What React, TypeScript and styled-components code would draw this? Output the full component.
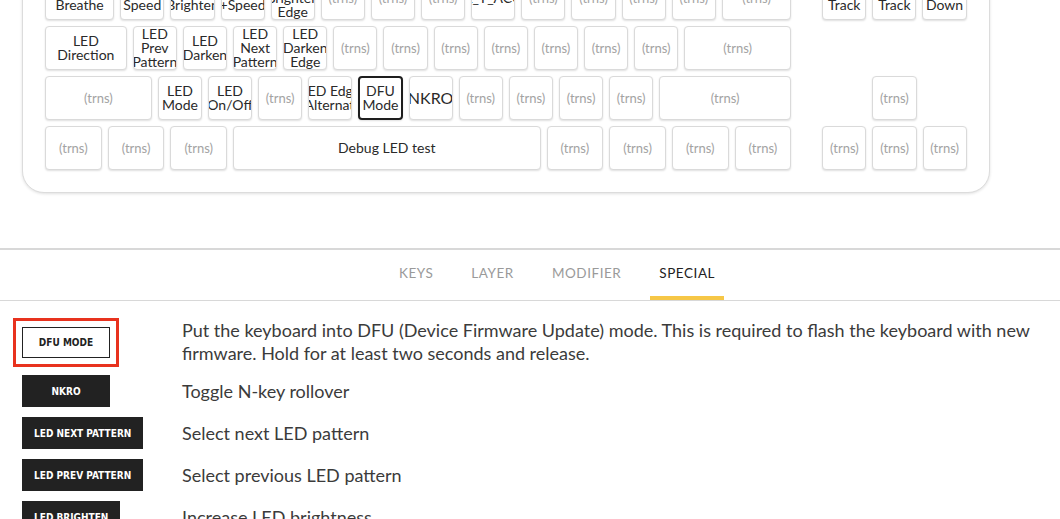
import React from "react";
import styled, { createGlobalStyle } from "styled-components";

const U = 50.15;
const GAP = 6;

const Global = createGlobalStyle`
  html, body { margin: 0; padding: 0; background: #ffffff; }
  body { overflow: hidden; font-family: Lato, "Noto Sans", sans-serif; color: #333; }
  * { box-sizing: border-box; }
`;

const Page = styled.div`
  width: 1060px;
  height: 519px;
  overflow: hidden;
  display: flex;
  flex-direction: column;
`;

const Card = styled.div`
  margin: -47px 0 0 22px;
  width: fit-content;
  padding: 22px;
  background: #fff;
  border: 1px solid #dcdcdc;
  border-radius: 0 0 22px 22px;
  box-shadow: 0 1px 3px rgba(0, 0, 0, 0.12);
  display: flex;
  flex-direction: column;
  gap: ${GAP}px;
`;

const Row = styled.div`
  display: flex;
  gap: ${GAP}px;
  height: 44px;
`;

const Spacer = styled.div<{ $w: number }>`
  width: ${(p) => p.$w * U - GAP}px;
  flex: none;
`;

const Key = styled.div<{ $w: number; $sel?: boolean }>`
  width: ${(p) => p.$w * U - GAP}px;
  height: 44px;
  flex: none;
  background: #fff;
  border: ${(p) => (p.$sel ? "2px solid #1e1e1e" : "1px solid #dadada")};
  border-radius: 4px;
  box-shadow: 0 1px 2px rgba(0, 0, 0, 0.13);
  display: flex;
  flex-direction: column;
  align-items: center;
  justify-content: center;
  overflow: hidden;
`;

const Line = styled.span<{ $big?: boolean }>`
  white-space: nowrap;
  font-size: ${(p) => (p.$big ? "16px" : "14px")};
  line-height: 14px;
  color: #2a2a2a;
`;

const Trns = styled.span`
  white-space: nowrap;
  font-size: 13px;
  color: #a3a3a3;
`;

const TabBar = styled.div`
  margin-top: 55px;
  border-top: 2px solid #d8d8d8;
  border-bottom: 1px solid #d8d8d8;
  display: flex;
  justify-content: center;
  gap: 20px;
  padding-left: 54px;
`;

const Tab = styled.div<{ $active?: boolean }>`
  height: 50px;
  padding: 0 9px;
  display: flex;
  align-items: center;
  border-bottom: 4px solid ${(p) => (p.$active ? "#f6c747" : "transparent")};
  font-size: 13.5px;
  letter-spacing: 0.55px;
  color: ${(p) => (p.$active ? "#222" : "#9a9a9a")};
`;

const List = styled.div`
  padding: 18px 20px 0 22px;
  display: grid;
  grid-template-columns: 160px 1fr;
  row-gap: 10px;
  align-items: center;
`;

const Btn = styled.div<{ $outline?: boolean }>`
  justify-self: start;
  min-width: 88px;
  height: ${(p) => (p.$outline ? "31px" : "32px")};
  padding: 0 12px;
  display: flex;
  align-items: center;
  justify-content: center;
  background: ${(p) => (p.$outline ? "#fff" : "#222")};
  color: ${(p) => (p.$outline ? "#222" : "#fff")};
  border: ${(p) => (p.$outline ? "1px solid #222" : "none")};
  outline: ${(p) => (p.$outline ? "3px solid #e8321e" : "none")};
  outline-offset: 6px;
  font-family: "Liberation Sans Narrow", "DejaVu Sans Condensed", "Roboto Condensed", sans-serif;
  font-weight: 700;
  font-stretch: condensed;
  font-size: 10px;
  letter-spacing: 0;
  white-space: nowrap;
`;

const Desc = styled.div`
  font-size: 18px;
  line-height: 23px;
  color: #3b3b3b;
`;

type KeyDef = { w?: number; l?: string[]; sel?: boolean; big?: boolean; gap?: boolean };

const T: KeyDef = {};
const G = (w: number): KeyDef => ({ gap: true, w });
const t = (w: number): KeyDef => ({ w });

const rows: KeyDef[][] = [
  [
    { w: 1.5, l: ["LED", "Breathe"] },
    { l: ["LED", "Speed"] },
    { l: ["LED", "Brighten"] },
    { l: ["LED", "+Speed"] },
    { l: ["LED", "Brighten", "Edge"] },
    T, T, T,
    { l: ["L_T_ACC"] },
    T, T, T, T,
    t(1.5),
    G(0.5),
    { l: ["Prev", "Track"] },
    { l: ["Next", "Track"] },
    { l: ["Vol", "Down"] },
  ],
  [
    { w: 1.75, l: ["LED", "Direction"] },
    { l: ["LED", "Prev", "Pattern"] },
    { l: ["LED", "Darken"] },
    { l: ["LED", "Next", "Pattern"] },
    { l: ["LED", "Darken", "Edge"] },
    T, T, T, T, T, T, T,
    t(2.25),
  ],
  [
    t(2.25),
    { l: ["LED", "Mode"] },
    { l: ["LED", "On/Off"] },
    T,
    { l: ["LED Edge", "/Alternate"] },
    { l: ["DFU", "Mode"], sel: true },
    { l: ["NKRO"], big: true },
    T, T, T, T,
    t(2.75),
    G(1.5),
    T,
  ],
  [
    t(1.25), t(1.25), t(1.25),
    { w: 6.25, l: ["Debug LED test"] },
    t(1.25), t(1.25), t(1.25), t(1.25),
    G(0.5),
    T, T, T,
  ],
];

const items: { label: string; desc: string; outline?: boolean }[] = [
  {
    label: "DFU MODE",
    outline: true,
    desc: "Put the keyboard into DFU (Device Firmware Update) mode. This is required to flash the keyboard with new firmware. Hold for at least two seconds and release.",
  },
  { label: "NKRO", desc: "Toggle N-key rollover" },
  { label: "LED NEXT PATTERN", desc: "Select next LED pattern" },
  { label: "LED PREV PATTERN", desc: "Select previous LED pattern" },
  { label: "LED BRIGHTEN", desc: "Increase LED brightness" },
  { label: "LED DARKEN", desc: "Decrease LED brightness" },
];

export default function App() {
  return (
    <Page>
      <Global />
      <Card>
        {rows.map((r, ri) => (
          <Row key={ri}>
            {r.map((k, ki) => {
              const w = k.w ?? 1;
              if (k.gap) return <Spacer key={ki} $w={w} />;
              return (
                <Key key={ki} $w={w} $sel={k.sel}>
                  {k.l ? (
                    k.l.map((ln, li) => (
                      <Line key={li} $big={k.big}>
                        {ln}
                      </Line>
                    ))
                  ) : (
                    <Trns>(trns)</Trns>
                  )}
                </Key>
              );
            })}
          </Row>
        ))}
      </Card>
      <TabBar>
        <Tab>KEYS</Tab>
        <Tab>LAYER</Tab>
        <Tab>MODIFIER</Tab>
        <Tab $active>SPECIAL</Tab>
      </TabBar>
      <List>
        {items.map((it) => (
          <React.Fragment key={it.label}>
            <Btn $outline={it.outline}>{it.label}</Btn>
            <Desc>{it.desc}</Desc>
          </React.Fragment>
        ))}
      </List>
    </Page>
  );
}
